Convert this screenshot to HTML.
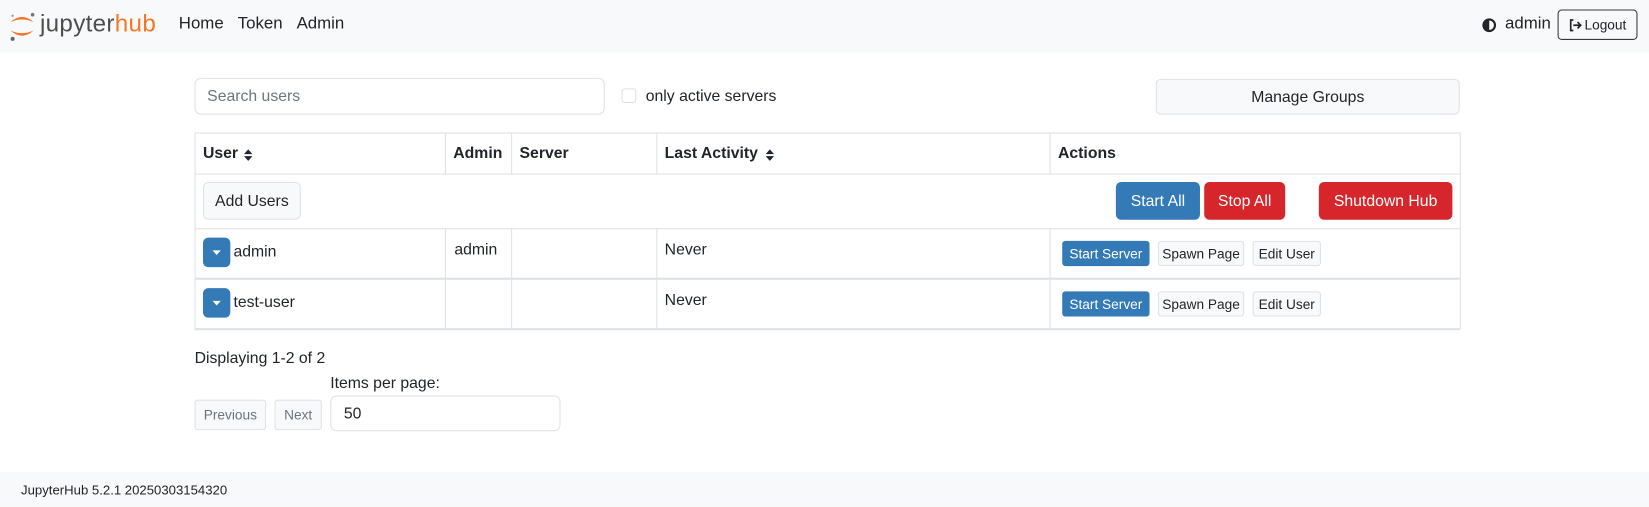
<!DOCTYPE html>
<html><head><meta charset="utf-8"><style>
html,body{margin:0;padding:0;background:#fff;overflow:hidden}
body{width:1649px;height:507px;font-family:"Liberation Sans",sans-serif;color:#212529}
#w{position:absolute;left:0;top:0;width:1568px;height:482px;transform:scale(1.0517);transform-origin:0 0}
.a{position:absolute}
.nav{left:0;top:0;width:1568px;height:50px;background:#f8f9fa}
.nl{font-size:16px;top:14px;color:#212529}
.btn{position:absolute;box-sizing:border-box;display:flex;align-items:center;justify-content:center;border-radius:5px;font-size:15px}
.lt{background:#f8f9fa;border:1px solid #dee2e6;color:#212529}
.bl{background:#337ab7;color:#fff}
.rd{background:#d7262b;color:#fff}
.sm{font-size:13px;border-radius:3px}
.vl{position:absolute;width:1px;background:#dee2e6}
.hl{position:absolute;height:1px;background:#dee2e6;left:185px;width:1203px}
.th{font-weight:bold;font-size:15px;top:137px}
.td{font-size:15px}
</style></head><body><div id="w">
<div class="a nav"></div>
<svg class="a" style="left:7px;top:10px" width="28" height="30" viewBox="0 0 28 30">
<path d="M3 11 Q14 1 25 11 Q14 6 3 11Z" fill="#f37726"/>
<path d="M3 19 Q14 29 25 19 Q14 24 3 19Z" fill="#f37726"/>
<circle cx="24" cy="4" r="1.7" fill="#767677"/><circle cx="5" cy="27" r="1.9" fill="#616262"/><circle cx="5" cy="5" r="1.1" fill="#989798"/>
</svg>
<div class="a" style="left:38px;top:9px;font-size:23px;letter-spacing:0.3px"><span style="color:#4e4e4e">jupyter</span><span style="color:#f37726">hub</span></div>
<div class="a nl" style="left:170px">Home</div>
<div class="a nl" style="left:226px">Token</div>
<div class="a nl" style="left:282px">Admin</div>
<svg class="a" style="left:1409px;top:17px" width="14" height="14" viewBox="0 0 14 14"><circle cx="7" cy="7" r="5.5" fill="none" stroke="#212529" stroke-width="2"/><path d="M7 1.5A5.5 5.5 0 0 0 7 12.5Z" fill="#212529"/></svg>
<div class="a nl" style="left:1431px">admin</div>
<div class="btn" style="left:1481px;top:9px;width:76px;height:29px;border:1px solid #343a40;font-size:13px;border-radius:4px">
<svg width="13" height="12" viewBox="0 0 13 12" style="margin-right:2px"><path d="M4 1H1.5V11H4" fill="none" stroke="#212529" stroke-width="1.6"/><path d="M4 6H11M8 3L11 6L8 9" fill="none" stroke="#212529" stroke-width="1.6"/></svg>Logout</div>

<div class="a" style="left:185px;top:74px;width:390px;height:35px;box-sizing:border-box;border:1px solid #dee2e6;border-radius:6px"></div>
<div class="a" style="left:197px;top:83px;font-size:15px;color:#6c757d">Search users</div>
<div class="a" style="left:591px;top:84px;width:14px;height:14px;box-sizing:border-box;border:1px solid #dee2e6;border-radius:3px"></div>
<div class="a" style="left:614px;top:83px;font-size:15px">only active servers</div>
<div class="btn lt" style="left:1099px;top:75px;width:289px;height:34px">Manage Groups</div>

<div class="hl" style="top:126px"></div>
<div class="hl" style="top:165px"></div>
<div class="hl" style="top:217px"></div>
<div class="hl" style="top:264px;height:2px"></div>
<div class="hl" style="top:312px;height:2px"></div>
<div class="vl" style="left:185px;top:126px;height:187px"></div>
<div class="vl" style="left:1388px;top:126px;height:187px"></div>
<div class="vl" style="left:423px;top:126px;height:39px"></div>
<div class="vl" style="left:486px;top:126px;height:39px"></div>
<div class="vl" style="left:624px;top:126px;height:39px"></div>
<div class="vl" style="left:998px;top:126px;height:39px"></div>
<div class="vl" style="left:423px;top:217px;height:96px"></div>
<div class="vl" style="left:486px;top:217px;height:96px"></div>
<div class="vl" style="left:624px;top:217px;height:96px"></div>
<div class="vl" style="left:998px;top:217px;height:96px"></div>

<div class="a th" style="left:193px">User</div>
<svg class="a" style="left:231px;top:141px" width="10" height="13" viewBox="0 0 10 13"><path d="M1 5.5L5 1L9 5.5ZM1 7.5L5 12L9 7.5Z" fill="#212529"/></svg>
<div class="a th" style="left:431px">Admin</div>
<div class="a th" style="left:494px">Server</div>
<div class="a th" style="left:632px">Last Activity</div>
<svg class="a" style="left:727px;top:141px" width="10" height="13" viewBox="0 0 10 13"><path d="M1 5.5L5 1L9 5.5ZM1 7.5L5 12L9 7.5Z" fill="#212529"/></svg>
<div class="a th" style="left:1006px">Actions</div>

<div class="btn lt" style="left:193px;top:173px;width:93px;height:36px">Add Users</div>
<div class="btn bl" style="left:1061px;top:173px;width:80px;height:36px">Start All</div>
<div class="btn rd" style="left:1145px;top:173px;width:77px;height:36px">Stop All</div>
<div class="btn rd" style="left:1254px;top:173px;width:127px;height:36px">Shutdown Hub</div>

<div class="btn bl" style="left:193px;top:226px;width:26px;height:28px"><svg width="8" height="5"><path d="M0 0H8L4 4.5Z" fill="#fff"/></svg></div>
<div class="a td" style="left:222px;top:231px">admin</div>
<div class="a td" style="left:432px;top:229px">admin</div>
<div class="a td" style="left:632px;top:229px">Never</div>
<div class="btn bl sm" style="left:1010px;top:229px;width:83px;height:24px">Start Server</div>
<div class="btn lt sm" style="left:1101px;top:229px;width:82px;height:24px">Spawn Page</div>
<div class="btn lt sm" style="left:1191px;top:229px;width:65px;height:24px">Edit User</div>

<div class="btn bl" style="left:193px;top:274px;width:26px;height:28px"><svg width="8" height="5"><path d="M0 0H8L4 4.5Z" fill="#fff"/></svg></div>
<div class="a td" style="left:222px;top:279px">test-user</div>
<div class="a td" style="left:632px;top:277px">Never</div>
<div class="btn bl sm" style="left:1010px;top:277px;width:83px;height:24px">Start Server</div>
<div class="btn lt sm" style="left:1101px;top:277px;width:82px;height:24px">Spawn Page</div>
<div class="btn lt sm" style="left:1191px;top:277px;width:65px;height:24px">Edit User</div>

<div class="a" style="left:185px;top:332px;font-size:15px">Displaying 1-2 of 2</div>
<div class="a" style="left:314px;top:356px;font-size:15px">Items per page:</div>
<div class="btn lt sm" style="left:185px;top:380px;width:68px;height:29px;color:#6c757d">Previous</div>
<div class="btn lt sm" style="left:261px;top:380px;width:45px;height:29px;color:#6c757d">Next</div>
<div class="a" style="left:314px;top:376px;width:219px;height:34px;box-sizing:border-box;border:1px solid #dee2e6;border-radius:6px"></div>
<div class="a" style="left:327px;top:385px;font-size:15px">50</div>

<div class="a" style="left:0;top:449px;width:1568px;height:33px;background:#f8f9fa"></div>
<div class="a" style="left:20px;top:459px;font-size:12.5px">JupyterHub 5.2.1 20250303154320</div>
</div></body></html>
